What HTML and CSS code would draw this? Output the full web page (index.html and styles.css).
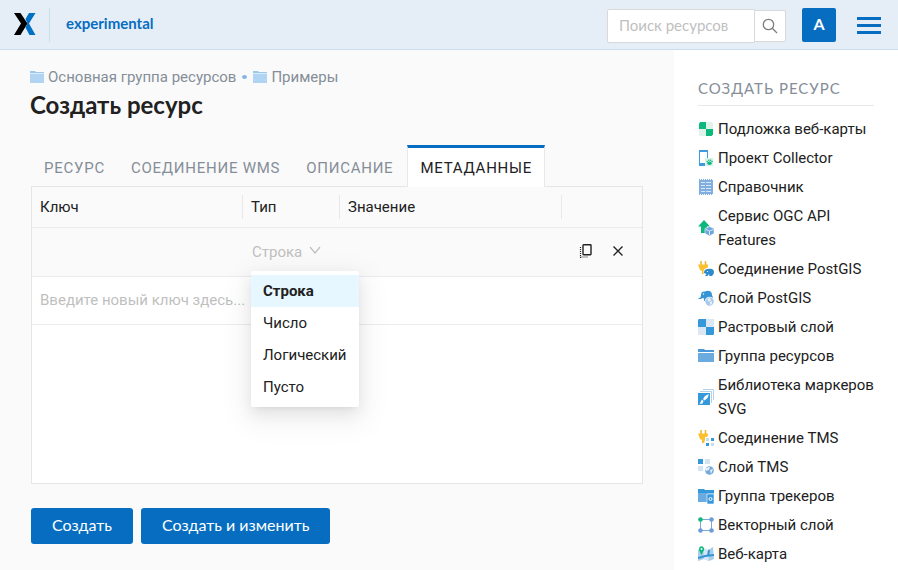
FILE: index.html
```
<!DOCTYPE html>
<html lang="ru">
<head>
<meta charset="utf-8">
<meta name="viewport" content="width=device-width, initial-scale=1">
<title>Создать ресурс</title>
<link rel="stylesheet" href="styles.css">
</head>
<body>
<header class="header">
  <a class="logo" href="#" aria-label="experimental">
    <svg width="22" height="22" viewBox="0 0 22 22"><path fill="#0070c5" d="M15 0H21.500L15 10.500L21.500 22H15.500L11.500 14.500L13.500 10.500L11.500 6z"/><path fill="#000" d="M0 0H6.500L13.500 10.500L6.500 22H0L7 10.500z"/></svg>
  </a>
  <a class="site-name" href="#">experimental</a>
  <form class="search">
    <input class="search-input" type="search" placeholder="Поиск ресурсов" aria-label="Поиск ресурсов">
    <button class="search-button" type="button" aria-label="Найти">
      <svg width="16" height="16" viewBox="0 0 16 16" fill="none" stroke="#7d7d7d" stroke-width="1.300"><circle cx="6.500" cy="6.500" r="5.200"/><path d="M10.300 10.300L15 15"/></svg>
    </button>
  </form>
  <button class="avatar" type="button">A</button>
  <button class="menu-button" type="button" aria-label="Меню"><span class="bar"></span><span class="bar"></span><span class="bar"></span></button>
</header>
<div class="layout">
  <main class="main">
    <nav class="path">
      <a class="path-link" href="#"><svg width="14" height="12" viewBox="0 0 14 12"><path fill="#9dc9ec" d="M0 0h5l1 1h8v11H0z"/><path fill="#b0d4f1" d="M0 3h14v9H0z"/><path fill="#d9ebf9" d="M0 2h14v1H0z"/></svg>Основная группа ресурсов</a>
      <span class="path-dot"></span>
      <a class="path-link" href="#"><svg width="14" height="12" viewBox="0 0 14 12"><path fill="#9dc9ec" d="M0 0h5l1 1h8v11H0z"/><path fill="#b0d4f1" d="M0 3h14v9H0z"/><path fill="#d9ebf9" d="M0 2h14v1H0z"/></svg>Примеры</a>
    </nav>
    <h1 class="title">Создать ресурс</h1>
    <div class="tabs" role="tablist">
      <button class="tab" type="button" role="tab">Ресурс</button>
      <button class="tab" type="button" role="tab">Соединение WMS</button>
      <button class="tab" type="button" role="tab">Описание</button>
      <button class="tab tab-active" type="button" role="tab" aria-selected="true">Метаданные</button>
    </div>
    <section class="panel">
      <table class="grid">
        <colgroup><col class="col-key"><col class="col-type"><col><col class="col-actions"></colgroup>
        <thead>
          <tr><th><div class="head-cell">Ключ</div></th><th><div class="head-cell">Тип</div></th><th><div class="head-cell">Значение</div></th><th><div class="head-cell"></div></th></tr>
        </thead>
        <tbody>
          <tr class="row-edit">
            <td><input class="cell-input" type="text" aria-label="Ключ"></td>
            <td>
              <div class="type">
                <select class="type-select" aria-label="Тип"><option>Строка</option><option>Число</option><option>Логический</option><option>Пусто</option></select>
                <svg class="chevron" width="12" height="12" viewBox="0 0 12 12" fill="none" stroke="#bfbfbf" stroke-width="1.200"><path d="M1 1L6 7L11 1"/></svg>
                <ul class="options" role="listbox">
                  <li class="option option-active" role="option" aria-selected="true">Строка</li>
                  <li class="option" role="option">Число</li>
                  <li class="option" role="option">Логический</li>
                  <li class="option" role="option">Пусто</li>
                </ul>
              </div>
            </td>
            <td><input class="cell-input" type="text" aria-label="Значение"></td>
            <td>
              <div class="actions">
                <button class="icon-button" type="button" aria-label="Дублировать"><svg width="14" height="14" viewBox="0 0 14 14" fill="none" stroke="#222"><rect x="4" y=".7" width="8" height="10" rx=".6" stroke-width="1.400"/><path d="M1.500 3v11M1.500 13h8" stroke-dasharray="1 1" stroke-width="1.200"/></svg></button>
                <button class="icon-button" type="button" aria-label="Удалить"><svg width="10" height="10" viewBox="0 0 10 10" stroke="#222" stroke-width="1.400"><path d="M.5 .5l9 9M9.500 .5l-9 9"/></svg></button>
              </div>
            </td>
          </tr>
          <tr class="row-new">
            <td><input class="cell-input cell-input-wide" type="text" placeholder="Введите новый ключ здесь..." aria-label="Новый ключ"></td><td></td><td></td><td></td>
          </tr>
        </tbody>
      </table>
    </section>
    <div class="buttons">
      <button class="button" type="button">Создать</button>
      <button class="button" type="button">Создать и изменить</button>
    </div>
  </main>
  <aside class="sidebar">
    <h2 class="side-title">Создать ресурс</h2>
    <ul class="side-list">
      <li><a class="side-link" href="#"><svg width="16" height="16" viewBox="0 0 16 16"><rect x="1" y="1" width="14" height="14" rx="1.500" fill="#e0f3ea"/><path fill="#0cb87c" d="M2.500 1H8v7H1V2.500zM8 8h7v5.500L13.500 15H8z"/></svg><span>Подложка веб-карты</span></a></li>
      <li><a class="side-link" href="#"><svg width="16" height="16" viewBox="0 0 16 16"><path d="M1 0h9v16H1z" fill="#3f9ade"/><path d="M2 2h7v11H2z" fill="#fff"/><path fill="#d9f2e8" d="M7 8h8v8H7z"/><g fill="#0cb87c"><ellipse cx="11.500" cy="13.300" rx="2.200" ry="1.700"/><circle cx="9.200" cy="11.500" r=".8"/><circle cx="10.800" cy="10.200" r=".8"/><circle cx="12.600" cy="10.200" r=".8"/><circle cx="14" cy="11.500" r=".8"/></g></svg><span>Проект Collector</span></a></li>
      <li><a class="side-link" href="#"><svg width="16" height="16" viewBox="0 0 16 16"><path fill="#82aedf" d="M1 1h14v14H1z"/><path stroke="#82aedf" stroke-width="1" stroke-dasharray="1 1" d="M1 .5h14M1 15.500h14"/><path stroke="#d5e6f7" fill="none" d="M3 3.500h4m1 0h5M3 6.500h4m1 0h5M3 9.500h4m1 0h5M3 12.500h4m1 0h5"/></svg><span>Справочник</span></a></li>
      <li><a class="side-link" href="#"><svg width="16" height="16" viewBox="0 0 16 16"><path fill="#0cb87c" d="M6 0l6 6.500H9V13H3V6.500H0z"/><path fill="#6ca4dc" stroke="#fff" stroke-width=".6" d="M11.500 6.500l4.500 2v5L11.500 16 7 13.500v-5z"/><path stroke="#d9e9f8" fill="none" d="M8 9.500l3.500 1.500L15 9.500M11.500 11v4"/></svg><span>Сервис OGC API Features</span></a></li>
      <li><a class="side-link" href="#"><svg width="16" height="16" viewBox="0 0 16 16"><path stroke="#ecb52a" stroke-width="1.500" d="M3 0v4M7.500 0v4"/><path fill="#fbc02d" d="M0 3.500h10v2L8.500 9 6 10v3H4V10L2 9z"/><path fill="#fff" d="M5.500 11c0-4 3-4 5-4 4-1 6 1 5.500 4l-1 5H6z"/><path fill="#2f8ccc" d="M6 12c0-4 3-4 4.500-4 3.500-1 5.500.5 5.500 3 0 2-1 2.500-2 4h-2.500l-.5-2-1.500 2H7l1.500-2z"/><circle cx="9.500" cy="10.500" r=".6" fill="#fff"/></svg><span>Соединение PostGIS</span></a></li>
      <li><a class="side-link" href="#"><svg width="16" height="16" viewBox="0 0 16 16"><path fill="#3494d6" d="M3 5C3 2 5 1 7 1.500 10 0 14 1 14 5l1 3H9l-1 3H6V8.500L4.500 8 3 9H0l1-1 1.500-.5z"/><circle cx="5.500" cy="4" r=".7" fill="#fff"/><circle cx="11.500" cy="11.500" r="4.800" fill="#fff"/><circle cx="11.500" cy="11.500" r="4.200" fill="#a9c9e8"/><path fill="#e5f0fa" d="M9 9l3-1 1 2-2 2zM12 12l2-1v3l-2 1z"/></svg><span>Слой PostGIS</span></a></li>
      <li><a class="side-link" href="#"><svg width="16" height="16" viewBox="0 0 16 16"><path fill="#dbe8f4" d="M0 0h16v16H0z"/><path fill="#3598db" d="M1 0h7v8H0V1zM8 8h8v7l-1 1H8z"/></svg><span>Растровый слой</span></a></li>
      <li><a class="side-link" href="#"><svg width="16" height="16" viewBox="0 0 16 16"><path fill="#4a98d8" d="M0 1h6l1 1h9v2H0z"/><path fill="#6cabdf" d="M0 5h16v9H0z"/></svg><span>Группа ресурсов</span></a></li>
      <li><a class="side-link" href="#"><svg width="16" height="16" viewBox="0 0 16 16"><path fill="none" stroke="#b2d2ec" d="M2 2.500h11.500V14M5 .5h10.500V11"/><path fill="#3598db" d="M0 4h12v12H0z"/><path fill="#fff" d="M11 5l-1.500 4-3 2.500-1.500-1.500 2-3zM4 10.500l1.500 1.500-1 2.500-3 .5z"/></svg><span>Библиотека маркеров SVG</span></a></li>
      <li><a class="side-link" href="#"><svg width="16" height="16" viewBox="0 0 16 16"><path stroke="#ecb52a" stroke-width="1.500" d="M3 0v4M7.500 0v4"/><path fill="#fbc02d" d="M0 3.500h10v2L8.500 7H7v3l-1 3H4V10L2 9z"/><path fill="#3598db" d="M13 8h3v3h-3zM8 13h3v3H8z"/><path fill="#c5def2" d="M8 8h3v3H8zM13 13h3v3h-3z"/></svg><span>Соединение TMS</span></a></li>
      <li><a class="side-link" href="#"><svg width="16" height="16" viewBox="0 0 16 16"><path fill="#3598db" d="M0 0h5v5H0z"/><path fill="#d3e4f2" d="M0 7h5v5H0zM7 0h5v5H7z"/><circle cx="11.500" cy="11.500" r="4.300" fill="#75a9dc"/><path fill="#e5f0fa" d="M7 9l5-1-1 3-3 1zM12 11l3-1-2 5z"/></svg><span>Слой TMS</span></a></li>
      <li><a class="side-link" href="#"><svg width="16" height="16" viewBox="0 0 16 16"><path fill="#3598db" d="M0 1h6l1 1h9v3H0z"/><path fill="#6cabdf" d="M0 5h16v9H0z"/><path fill="#3598db" stroke="#fff" stroke-width=".6" d="M9 6h7v10H9z"/><circle cx="12.500" cy="11" r="1.500" fill="none" stroke="#fff"/></svg><span>Группа трекеров</span></a></li>
      <li><a class="side-link" href="#"><svg width="16" height="16" viewBox="0 0 16 16"><path fill="none" stroke="#7da8dc" d="M2.500 2.500h11v11h-11z"/><circle cx="2.500" cy="2.500" r="2.300" fill="#0cb87c"/><g fill="#6c9cd8"><circle cx="13.500" cy="2.500" r="2.300"/><circle cx="2.500" cy="13.500" r="2.300"/><circle cx="13.500" cy="13.500" r="2.300"/></g></svg><span>Векторный слой</span></a></li>
      <li><a class="side-link" href="#"><svg width="16" height="16" viewBox="0 0 16 16"><path fill="#a8cde9" d="M0 4l5-2 5 2 5-3 1 12-5 2-5-2-6 2z"/><path fill="#d5e7f5" d="M5 2l5 2 1 11-5-2z"/><path fill="none" stroke="#3494d6" stroke-width="2" d="M0 12l7-2 9-1M11 4l-1 6"/><path fill="#0cb87c" d="M3.500 9L1 4c-.7-5 5.700-5 5 0z"/><circle cx="3.500" cy="3" r="1" fill="#fff"/></svg><span>Веб-карта</span></a></li>
    </ul>
  </aside>
</div>
</body>
</html>
```
FILE: styles.css
```
* { box-sizing: border-box; }

body {
  margin: 0;
  min-height: 100vh;
  display: flex;
  flex-direction: column;
  background: #fafafa;
  color: #212121;
  font: 15px/24px Roboto, sans-serif;
}

a { color: inherit; text-decoration: none; }
button, input, select { font: inherit; color: inherit; }
ul { margin: 0; padding: 0; list-style: none; }
svg { display: block; flex: none; }

/* Header */
.header {
  display: flex;
  align-items: center;
  height: 50px;
  padding: 0 16px 0 14px;
  background: #e5eef7;
  border-bottom: 1px solid #cbdcec;
}

.logo {
  display: flex;
  align-items: center;
  height: 34px;
  padding: 0 13px 2px 0;
  border-right: 1px solid #cbdcec;
}

.site-name {
  margin-left: 16px;
  padding-bottom: 3px;
  color: #066dc1;
  font: 700 15px/24px Lato, sans-serif;
}

.search {
  display: flex;
  align-items: center;
  margin-left: auto;
  padding-top: 2px;
}

.search-input {
  width: 148px;
  height: 34px;
  padding: 0 11px 2px;
  border: 1px solid #d9d9d9;
  border-radius: 2px 0 0 2px;
  background: #fff;
  appearance: none;
  font: 15px/24px Lato, sans-serif;
}

.search-button {
  display: flex;
  align-items: center;
  justify-content: center;
  width: 32px;
  height: 32px;
  margin-left: -1px;
  padding: 0;
  border: 1px solid #d9d9d9;
  border-radius: 0 2px 2px 0;
  background: #fff;
}

::placeholder { color: #bfbfbf; opacity: 1; }

.avatar {
  width: 34px;
  height: 34px;
  margin-left: 16px;
  padding: 0 0 2px;
  border: 0;
  border-radius: 2px;
  background: #066dc1;
  color: #fff;
  font: 700 16px/24px Lato, sans-serif;
}

.menu-button {
  display: flex;
  flex-direction: column;
  gap: 4px;
  width: 26px;
  margin-left: 20px;
  padding: 1px 1px 0;
  border: 0;
  background: none;
}

.bar { height: 3px; background: #066dc1; }

/* Page */
.layout { flex: 1; display: flex; }

.main {
  flex: 1;
  min-width: 0;
  display: flex;
  flex-direction: column;
  padding: 15px 31px 26px 30px;
}

.path {
  display: flex;
  align-items: center;
  gap: 6px;
  color: #858e98;
}

.path-link { display: flex; align-items: center; gap: 4px; }

.path-dot {
  width: 5px;
  height: 4px;
  border-radius: 50%;
  background: #83b6e0;
}

.title {
  margin: 0 0 24px;
  font: 700 24px/32px Lato, sans-serif;
}

.tabs {
  display: flex;
  gap: 2px;
  margin: 0 0 -1px 1px;
}

.tab {
  height: 42px;
  padding: 3px 12px 0;
  border: 0;
  background: none;
  color: #858e98;
  text-transform: uppercase;
  letter-spacing: .05em;
}

.tab:first-child { padding-left: 13px; }

.tab-active {
  position: relative;
  padding: 0 12px;
  border: 1px solid #e8e8e8;
  border-top: 3px solid #066dc1;
  border-bottom: 0;
  background: #fff;
  color: #212121;
}

.panel {
  flex: 1;
  margin-left: 1px;
  border: 1px solid #e4e6e8;
  background: #fff;
}

/* Metadata table */
.grid {
  width: 100%;
  table-layout: fixed;
  border-collapse: collapse;
}

.col-key { width: 211px; }
.col-type { width: 97px; }
.col-actions { width: 80px; }

.grid tr { border-bottom: 1px solid #ebebeb; }
.grid thead, .row-edit { background: #fafafa; }

th {
  height: 40px;
  padding: 0;
  font-weight: 400;
  text-align: left;
}

td { height: 48px; padding: 0 0 0 8px; }
.row-edit td { height: 49px; }

.head-cell {
  height: 24px;
  padding-left: 8px;
  border-right: 1px solid #e8e8e8;
}

th:last-child .head-cell { border-right: 0; }

.cell-input {
  display: block;
  width: 100%;
  padding: 0;
  border: 0;
  background: none;
}

.cell-input-wide { width: calc(100% + 8px); }

.type {
  position: relative;
  display: flex;
  align-items: center;
}

.type-select {
  width: 58px;
  height: 24px;
  padding: 0 0 0 1px;
  border: 0;
  background: none;
  appearance: none;
  color: #bfbfbf;
}

.options {
  position: absolute;
  top: 31px;
  left: 0;
  z-index: 1;
  padding: 4px 0;
  border-radius: 2px;
  background: #fff;
  box-shadow: 0 3px 6px -4px rgba(0, 0, 0, .12), 0 6px 16px rgba(0, 0, 0, .08), 0 9px 28px 8px rgba(0, 0, 0, .05);
}

.option { padding: 4px 12px; }
.option-active { background: #e6f7ff; font-weight: 700; }

.actions {
  display: flex;
  align-items: center;
  gap: 8px;
  padding: 0 0 2px 4px;
}

.icon-button {
  display: flex;
  align-items: center;
  justify-content: center;
  width: 24px;
  height: 24px;
  padding: 0;
  border: 0;
  background: none;
}

.buttons {
  display: flex;
  gap: 8px;
  margin: 24px 0 0 1px;
}

.button {
  height: 36px;
  padding: 0 21px 2px;
  border: 0;
  border-radius: 3px;
  background: #066dc1;
  color: #fff;
  font: 16px/24px Lato, sans-serif;
}

/* Sidebar */
.sidebar {
  width: 224px;
  padding: 24px 24px 0;
  background: #fff;
}

.side-title {
  margin: 0 0 8px;
  padding: 2px 0 5px;
  border-bottom: 1px solid #e8e8e8;
  color: #858e98;
  font: 400 15px/24px Lato, sans-serif;
  letter-spacing: 1px;
  text-transform: uppercase;
}

.side-link {
  display: flex;
  align-items: center;
  gap: 4px;
  padding: 3px 0 2px;
}
```
